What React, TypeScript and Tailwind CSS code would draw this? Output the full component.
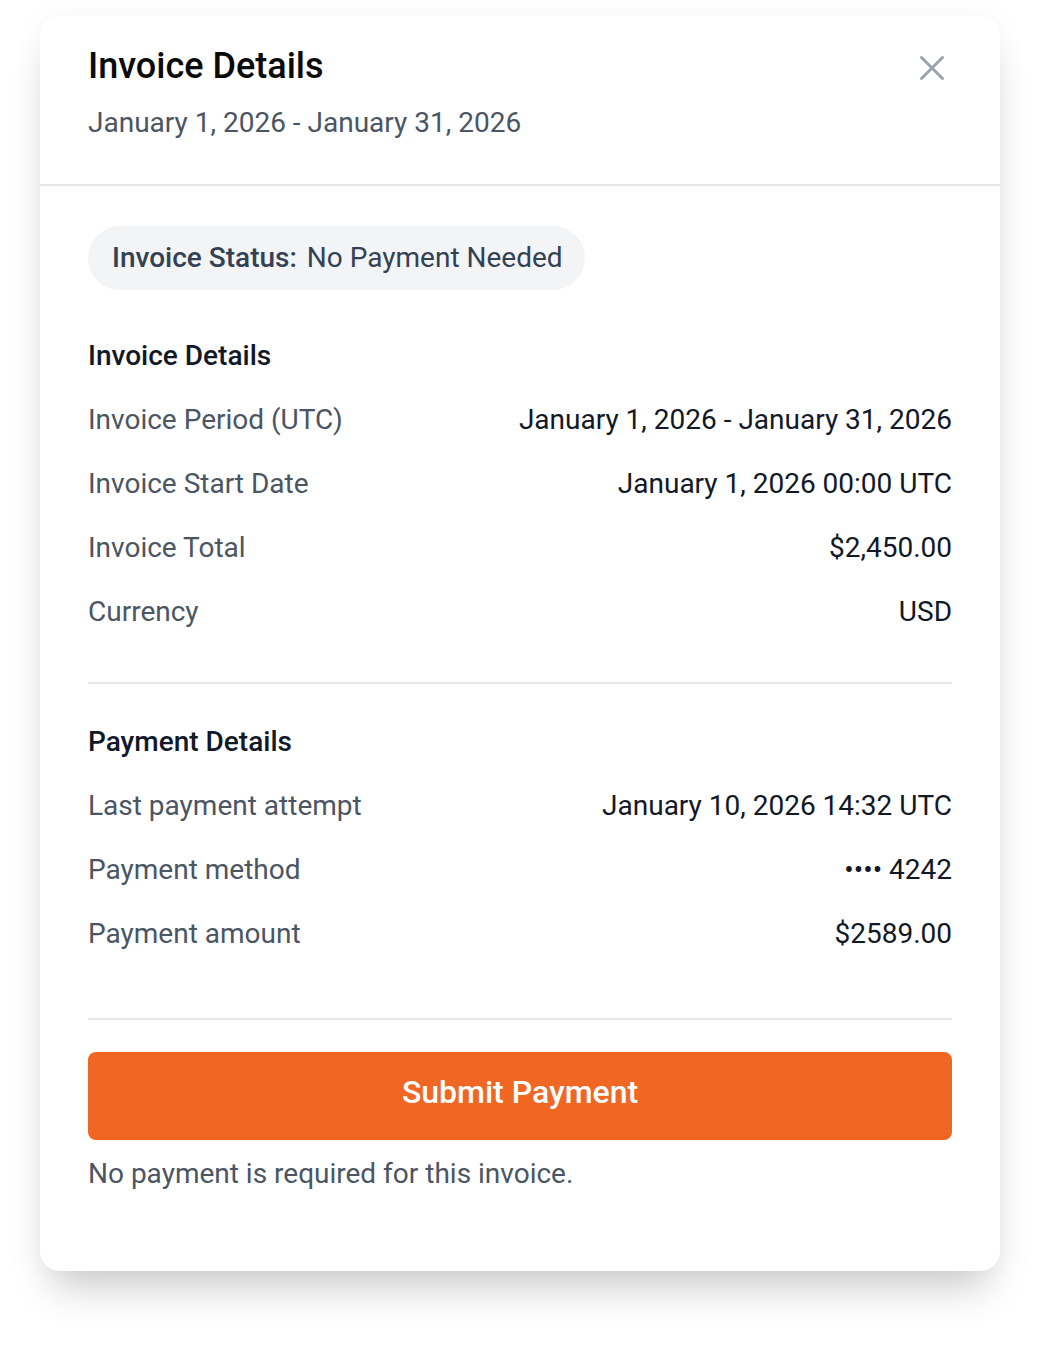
import React from "react";

interface Row {
  label: string;
  value: string;
}

const invoiceRows: Row[] = [
  { label: "Invoice Period (UTC)", value: "January 1, 2026 - January 31, 2026" },
  { label: "Invoice Start Date", value: "January 1, 2026 00:00 UTC" },
  { label: "Invoice Total", value: "$2,450.00" },
  { label: "Currency", value: "USD" },
];

const paymentRows: Row[] = [
  { label: "Last payment attempt", value: "January 10, 2026 14:32 UTC" },
  { label: "Payment method", value: "•••• 4242" },
  { label: "Payment amount", value: "$2589.00" },
];

const Section: React.FC<{ title: string; rows: Row[] }> = ({ title, rows }) => (
  <div className="flex flex-col gap-6">
    <h3 className="text-[28px] leading-10 font-medium text-[#111827]">{title}</h3>
    {rows.map((row) => (
      <div key={row.label} className="flex items-center justify-between text-[28px] leading-10">
        <span className="text-[#4b5563]">{row.label}</span>
        <span className="text-[#111827]">{row.value}</span>
      </div>
    ))}
  </div>
);

export default function App() {
  return (
    <div className="min-h-screen bg-white px-10 pt-4 pb-20 font-['Roboto',sans-serif]">
      <div className="rounded-[20px] bg-white shadow-[0_28px_40px_-12px_rgba(0,0,0,0.2),0_0_30px_rgba(0,0,0,0.04)]">
        {/* header */}
        <div className="flex items-start justify-between border-b-2 border-[#e5e7eb] pl-12 pr-14 pt-[30px] pb-[41px]">
          <div className="flex flex-col gap-[17px]">
            <h2 className="text-[36px] leading-10 font-medium text-[#0a0a0a]">Invoice Details</h2>
            <p className="text-[28px] leading-10 text-[#4b5563]">January 1, 2026 - January 31, 2026</p>
          </div>
          <button className="mt-[10px] text-[#9ca3af]" aria-label="Close">
            <svg width="24" height="24" viewBox="0 0 24 24" fill="none" stroke="currentColor" strokeWidth="3" strokeLinecap="round">
              <path d="M1.5 1.5L22.5 22.5M22.5 1.5L1.5 22.5" />
            </svg>
          </button>
        </div>

        {/* body */}
        <div className="px-12 pt-10 pb-[77px]">
          <div className="inline-flex h-16 items-center gap-[10px] rounded-full bg-[#f3f4f6] pl-6 pr-[22px] text-[28px] text-[#334155]">
            <span className="font-medium">Invoice Status:</span>
            <span>No Payment Needed</span>
          </div>

          <div className="mt-[46px] border-b-2 border-[#e5e7eb] pb-[50px]">
            <Section title="Invoice Details" rows={invoiceRows} />
          </div>

          <div className="mt-[38px] border-b-2 border-[#e5e7eb] pb-16">
            <Section title="Payment Details" rows={paymentRows} />
          </div>

          <button className="mt-8 flex h-[88px] w-full items-center justify-center rounded-lg bg-[#f06723] pb-2 text-[32px] font-medium text-white">
            Submit Payment
          </button>
          <p className="mt-[14px] text-[28px] leading-10 text-[#4b5563]">No payment is required for this invoice.</p>
        </div>
      </div>
    </div>
  );
}
